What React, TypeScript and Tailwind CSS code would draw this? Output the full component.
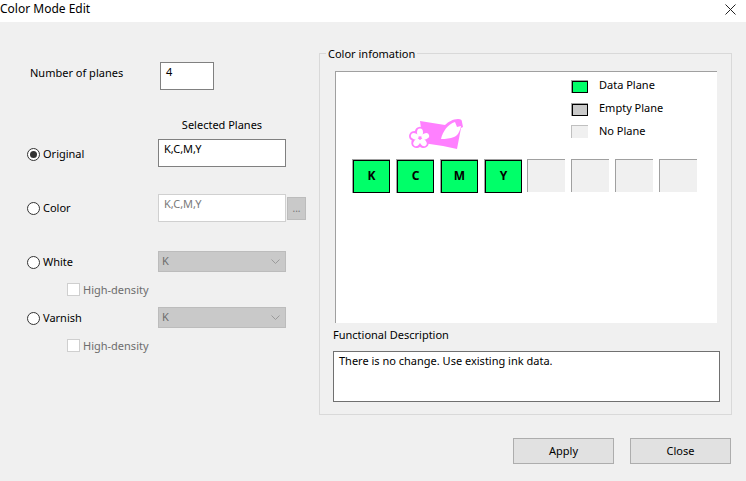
const font = { fontFamily: '"Noto Sans", sans-serif' };

function Radio({ checked, label, nudge }: { checked?: boolean; label: string; nudge?: string }) {
  return (
    <div className={`flex w-[158px] items-center pl-[27px] text-[11px] text-[#000] ${nudge ?? ""}`}>
      <span className="flex h-[13px] w-[13px] items-center justify-center rounded-full border border-[#333] bg-white">
        {checked && <span className="h-[7px] w-[7px] rounded-full bg-[#333]" />}
      </span>
      <span className="ml-[3px] mt-[1px]">{label}</span>
    </div>
  );
}

function DisabledSelect() {
  return (
    <div className="flex h-[21px] w-[128px] items-center justify-between border border-[#bcbcbc] bg-[#c9c9c9] pl-[3px] pr-[5px] text-[11px] text-[#6d6d6d]">
      <span>K</span>
      <svg width="9" height="5" viewBox="0 0 9 5" fill="none" stroke="#9a9a9a" strokeWidth="1">
        <path d="M0.5 0.5 L4.5 4.5 L8.5 0.5" />
      </svg>
    </div>
  );
}

function HighDensity() {
  return (
    <div className="mt-[11px] flex h-[13px] items-center pl-[67px] text-[11px] text-[#6d6d6d]">
      <span className="h-[13px] w-[13px] border border-[#cfcfcf] bg-white" />
      <span className="ml-[3px] mt-[1px]">High-density</span>
    </div>
  );
}

function DataPlane({ label }: { label: string }) {
  return (
    <div className="flex h-[34px] w-[38px] border-l border-t border-[#a0a0a0]">
      <div className="flex flex-1 items-center justify-center border border-black bg-[#00ff69] pb-[1px] text-[12px] font-bold text-black">
        {label}
      </div>
    </div>
  );
}

function NoPlane() {
  return <div className="h-[33px] w-[38px] border-l border-t border-[#a0a0a0] bg-[#f0f0f0]" />;
}

function LegendRow({ swatch, label, lift }: { swatch: React.ReactNode; label: string; lift?: boolean }) {
  return (
    <div className="flex h-[13px] items-center">
      {swatch}
      <span className={lift ? "ml-[11px] mt-[-2px] text-[11px] text-[#000]" : "ml-[11px] text-[11px] text-[#000]"}>{label}</span>
    </div>
  );
}

function Swatch({ color }: { color: string }) {
  return (
    <div className="flex h-[13px] w-[17px] border-l border-t border-[#a0a0a0]">
      <div className={`flex-1 border border-black ${color}`} />
    </div>
  );
}

function PinkIcon() {
  const angles = [0, 72, 144, 216, 288];
  return (
    <svg className="absolute left-[73px] top-[47px]" width="56" height="32" viewBox="0 0 56 32">
      <path d="M11 2 L36 6 C39 3 44 0 49 0 C52 0 53 1 53 3 L54 8 L52 9 L48 30 L34 27 L14 24 Z" fill="#ff80ff" />
      <g transform="translate(11 19)">
        {angles.map((a) => (
          <circle key={a} transform={`rotate(${a}) translate(0 -6)`} r="5.2" fill="#ff80ff" />
        ))}
        {angles.map((a) => (
          <ellipse key={a} transform={`rotate(${a}) translate(0 -5.5)`} rx="3" ry="4" fill="#ffffff" />
        ))}
        <circle r="1.2" fill="#ff80ff" />
      </g>
      <path d="M32 20 C34 12 39 5 46 3 L48 8 L52 7 C51 13 48 17 45 18 C41 19.5 37 20 32 20 Z" fill="#ffffff" />
    </svg>
  );
}

export default function App() {
  return (
    <div className="flex h-[481px] w-[746px] flex-col overflow-hidden bg-[#f0f0f0] text-black" style={font}>
      <div className="flex h-[22px] items-center justify-between bg-white pr-[10px] text-[12px]">
        <span className="mt-[-4px]">Color Mode Edit</span>
        <svg className="mt-[-4px]" width="11" height="11" viewBox="0 0 11 11" stroke="#222" strokeWidth="1" fill="none">
          <path d="M0.5 0.5 L10.5 10.5 M10.5 0.5 L0.5 10.5" />
        </svg>
      </div>

      <div className="flex flex-1">
        <div className="w-[319px] pt-[40px]">
          <div className="flex items-start">
            <span className="ml-[30px] mt-[3px] w-[130px] text-[11px]">Number of planes</span>
            <div className="h-[28px] w-[54px] border border-[#808080] bg-white pl-[5px] pt-[1px] text-[11px]">4</div>
          </div>

          <div className="mt-[28px] h-[14px] pl-[158px] text-center">
            <div className="w-[128px] text-[11px] leading-[14px]">Selected Planes</div>
          </div>

          <div className="mt-[7px] flex items-center">
            <Radio checked label="Original" nudge="mt-[2px]" />
            <div className="h-[28px] w-[128px] border border-[#808080] bg-white pl-[5px] pt-[1px] text-[11px]">K,C,M,Y</div>
          </div>

          <div className="mt-[27px] flex items-center">
            <Radio label="Color" />
            <div className="h-[28px] w-[128px] border border-[#d0d0d0] bg-white pl-[5px] pt-[1px] text-[11px] text-[#7a7a7a]">K,C,M,Y</div>
            <div className="ml-[1px] flex h-[23px] w-[19px] items-center justify-center border border-[#bcbcbc] bg-[#c9c9c9] text-[10px] text-[#777]">...</div>
          </div>

          <div className="mt-[29px] flex items-center">
            <Radio label="White" nudge="mt-[1px]" />
            <DisabledSelect />
          </div>
          <HighDensity />

          <div className="mt-[11px] flex items-center">
            <Radio label="Varnish" nudge="mt-[1px]" />
            <DisabledSelect />
          </div>
          <HighDensity />
        </div>

        <div className="pt-[31px]">
          <div className="relative h-[362px] w-[413px] border border-[#d9d9d9] pl-[13px] pt-[17px]">
            <span className="absolute left-[6px] top-[-8px] bg-[#f0f0f0] px-[2px] text-[11px] leading-[15px]">Color infomation</span>
            <div className="relative ml-[2px] flex h-[252px] w-[382px] flex-col border-l border-t border-[#a0a0a0] bg-white pt-[8px]">
              <div className="flex flex-col gap-[9.5px] pl-[235px]">
                <LegendRow swatch={<Swatch color="bg-[#00ff69]" />} label="Data Plane" lift />
                <LegendRow swatch={<Swatch color="bg-[#c9c9c9]" />} label="Empty Plane" lift />
                <LegendRow swatch={<div className="h-[13px] w-[17px] border-l border-t border-[#c0c0c0] bg-[#f0f0f0]" />} label="No Plane" />
              </div>
              <PinkIcon />
              <div className="ml-[16px] mt-[21px] flex items-start gap-[6px]">
                <DataPlane label="K" />
                <DataPlane label="C" />
                <DataPlane label="M" />
                <DataPlane label="Y" />
                <div className="ml-[-1px] flex gap-[6px]">
                  <NoPlane />
                  <NoPlane />
                  <NoPlane />
                  <NoPlane />
                </div>
              </div>
            </div>
            <div className="mt-[4px] h-[16px] text-[11px] leading-[16px]">Functional Description</div>
            <div className="mt-[8px] h-[51px] w-[387px] border border-[#707070] bg-white pl-[5px] text-[11px] leading-[18px]">
              There is no change. Use existing ink data.
            </div>
          </div>
          <div className="mt-[23px] flex w-[412px] justify-end gap-[16px]">
            <div className="flex h-[26px] w-[101px] items-center justify-center border border-[#adadad] bg-[#e1e1e1] text-[11px]">Apply</div>
            <div className="flex h-[26px] w-[101px] items-center justify-center border border-[#adadad] bg-[#e1e1e1] text-[11px]">Close</div>
          </div>
        </div>
      </div>
    </div>
  );
}
